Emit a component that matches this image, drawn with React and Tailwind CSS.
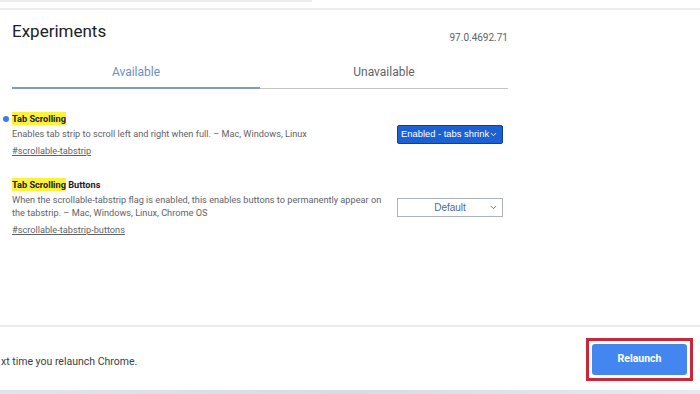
import { ChevronDown } from "lucide-react";

const flags = [
  {
    dot: true,
    title: "Tab Scrolling",
    rest: "",
    desc: "Enables tab strip to scroll left and right when full. – Mac, Windows, Linux",
    link: "#scrollable-tabstrip",
    value: "Enabled - tabs shrink",
    enabled: true,
  },
  {
    dot: false,
    title: "Tab Scrolling",
    rest: " Buttons",
    desc: "When the scrollable-tabstrip flag is enabled, this enables buttons to permanently appear on the tabstrip. – Mac, Windows, Linux, Chrome OS",
    link: "#scrollable-tabstrip-buttons",
    value: "Default",
    enabled: false,
  },
];

export default function App() {
  return (
    <div className="relative h-[394px] w-[700px] overflow-hidden bg-white font-['Roboto',sans-serif]">
      {/* remnant of search bar */}
      <div className="h-[2px] w-[312px] bg-[#ececec]" />
      <div className="mt-[6px] h-[2px] w-full bg-[#ececec]" />

      <div className="w-[508px] pl-3">
        <div className="mt-[11px] flex items-end justify-between">
          <h1 className="text-[17px] leading-[20px] text-[#202124]">Experiments</h1>
          <span className="mb-[-4px] text-[10px] text-[#5f6368]">97.0.4692.71</span>
        </div>

        <div className="mt-[16px] flex">
          <div className="flex h-[32px] flex-1 items-center justify-center border-b-2 border-[#7b9ccb] text-[12px] text-[#6d8fc2]">
            Available
          </div>
          <div className="flex h-[32px] flex-1 items-center justify-center border-b border-[#c4c4c4] pb-px text-[12px] text-[#5f6368]">
            Unavailable
          </div>
        </div>

        <div className="mt-[23px] flex flex-col gap-[21px]">
          {flags.map((f, i) => (
            <div key={i} className="relative flex items-center">
              {f.dot && (
                <span className="absolute left-[-9px] top-[4px] h-[6px] w-[6px] rounded-full bg-[#3b7de6]" />
              )}
              <div className="w-[385px] pr-2 text-[9.2px] leading-[13px]">
                <div className="mb-[2px] font-bold text-[#202124]">
                  <span className="bg-[#fbf23a] py-[1px]">{f.title}</span>
                  {f.rest}
                </div>
                <p className="text-[#5f6368]">{f.desc}</p>
                <a className="mt-[4px] block text-[#5f6368] underline">{f.link}</a>
              </div>
              {f.enabled ? (
                <div className="flex h-[19px] w-[106px] items-center justify-between whitespace-nowrap rounded-[2px] border border-[#12408f] bg-[#1b61d4] pl-[3px] pr-[4px] font-['Liberation_Sans',sans-serif] text-[9.4px] text-white">
                  <span>{f.value}</span>
                  <ChevronDown className="h-[9px] w-[9px] shrink-0" strokeWidth={2.5} />
                </div>
              ) : (
                <div className="relative flex h-[19px] w-[106px] items-center justify-center border border-[#aab2bf] bg-white font-['Liberation_Sans',sans-serif] text-[10px] text-[#4d6a96]">
                  <span>{f.value}</span>
                  <ChevronDown className="absolute right-[4px] h-[9px] w-[9px] text-[#4d6a96]" strokeWidth={2.5} />
                </div>
              )}
            </div>
          ))}
        </div>
      </div>

      {/* footer */}
      <div className="absolute left-0 top-[325px] w-full">
        <div className="h-[2px] w-full bg-[#ebebeb]" />
        <div className="flex h-[63px] items-center justify-between pl-[1px] pr-[7px]">
          <span className="mt-[6px] text-[10.5px] text-[#3c4043]">xt time you relaunch Chrome.</span>
          <div className="mt-[1px] border-[3px] border-[#c9283b] p-[3px]">
            <button className="flex h-[31px] w-[95px] items-center justify-center rounded-[3px] bg-[#4486f0] text-[10.5px] font-bold text-white">
              Relaunch
            </button>
          </div>
        </div>
        <div className="h-[4px] w-full bg-gradient-to-r from-[#dfe4ee] via-[#d6dce8] to-[#e6e9ef]" />
      </div>
    </div>
  );
}
